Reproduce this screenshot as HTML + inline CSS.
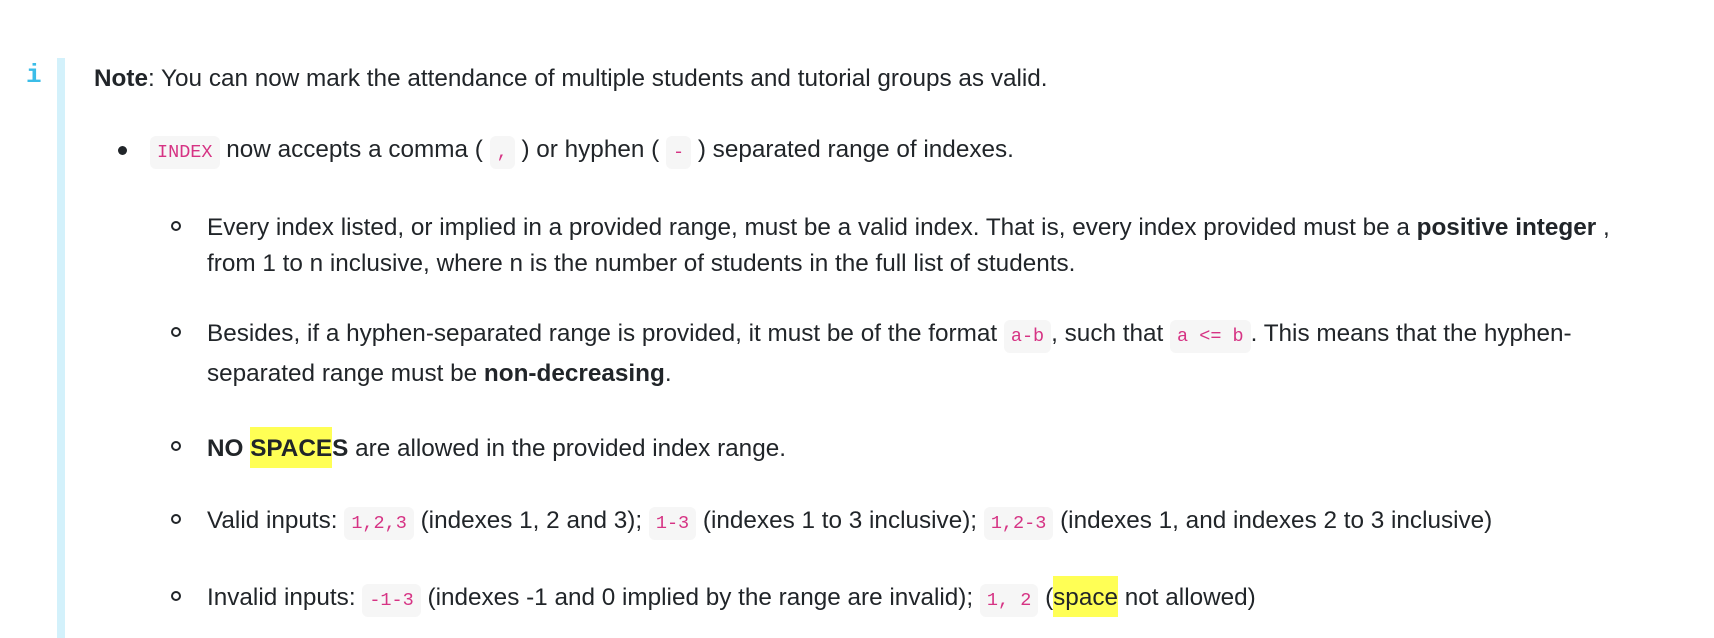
<!DOCTYPE html>
<html><head><meta charset="utf-8"><style>
html,body{margin:0;padding:0;background:#fff;}
body{width:1714px;height:630px;position:relative;overflow:hidden;font-family:"Liberation Sans",sans-serif;font-size:24.3px;color:#212529;}
.bar{position:absolute;left:57px;top:58px;width:8px;height:580px;background:#d3f1fb;}
.i{position:absolute;left:26px;top:60px;font-family:"Liberation Mono",monospace;font-size:26px;color:#3bbde8;font-weight:bold;}
.l{position:absolute;white-space:nowrap;line-height:30px;}
code{font-family:"Liberation Mono",monospace;font-size:18.5px;color:#d63384;background:#f6f6f6;border-radius:6px;padding:6px 7px;}
.d{position:absolute;width:9px;height:9px;border-radius:50%;background:#212529;}
.c{position:absolute;width:6px;height:6px;border-radius:50%;border:2px solid #212529;}
mark{background:#ffff55;color:inherit;padding:8px 0 6px;}
</style></head><body>
<div class="i">i</div>
<div class="bar"></div>
<div class="l" style="left:94px;top:64px"><b>Note</b>: You can now mark the attendance of multiple students and tutorial groups as valid.</div>
<div class="d" style="left:118px;top:146px"></div>
<div class="l" style="left:150px;top:135px"><code>INDEX</code> now accepts a comma ( <code>,</code> ) or hyphen ( <code>-</code> ) separated range of indexes.</div>
<div class="c" style="left:171px;top:221px"></div>
<div class="l" style="left:207px;top:213px">Every index listed, or implied in a provided range, must be a valid index. That is, every index provided must be a <b>positive integer</b> ,</div>
<div class="l" style="left:207px;top:249px">from 1 to n inclusive, where n is the number of students in the full list of students.</div>
<div class="c" style="left:171px;top:327px"></div>
<div class="l" style="left:207px;top:319px">Besides, if a hyphen-separated range is provided, it must be of the format <code>a-b</code>, such that <code>a &lt;= b</code>. This means that the hyphen-</div>
<div class="l" style="left:207px;top:359px">separated range must be <b>non-decreasing</b>.</div>
<div class="c" style="left:171px;top:441px"></div>
<div class="l" style="left:207px;top:434px"><b>NO <mark>SPACE</mark>S</b> are allowed in the provided index range.</div>
<div class="c" style="left:171px;top:514px"></div>
<div class="l" style="left:207px;top:506px">Valid inputs: <code>1,2,3</code> (indexes 1, 2 and 3); <code>1-3</code> (indexes 1 to 3 inclusive); <code>1,2-3</code> (indexes 1, and indexes 2 to 3 inclusive)</div>
<div class="c" style="left:171px;top:591px"></div>
<div class="l" style="left:207px;top:583px">Invalid inputs: <code>-1-3</code> (indexes -1 and 0 implied by the range are invalid); <code>1, 2</code> (<mark>space</mark> not allowed)</div>
</body></html>
